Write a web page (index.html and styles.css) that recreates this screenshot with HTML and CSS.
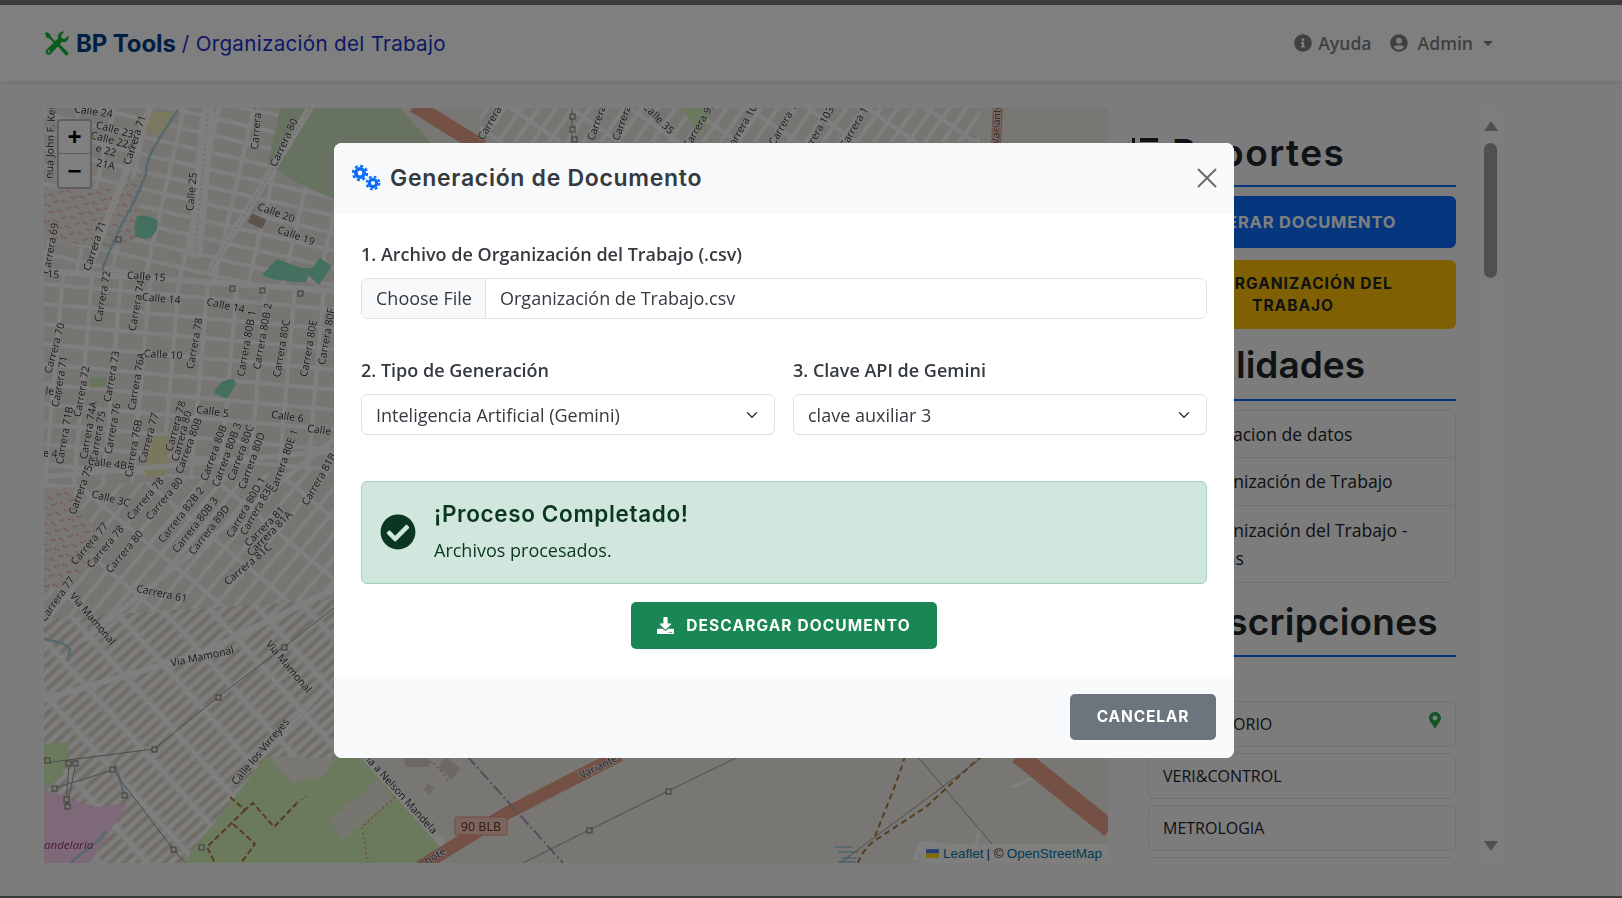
FILE: index.html
```html
<!DOCTYPE html>
<html lang="es">
<head>
    <meta charset="UTF-8">
    <meta name="viewport" content="width=device-width, initial-scale=1.0">
    <title>BP Tools - Organización del Trabajo</title>
    <link rel="stylesheet" href="styles.css">
</head>
<body>
    <nav class="navbar">
        <div class="brand">
            <svg class="brand-icon" viewBox="0 0 24 24">
                <path d="M1 2.500 2.500 1l3.500 2 .5 2.500L13 12l-1.500 1.500L5 7 2.500 6.500z" fill="#14b83a"/>
                <path d="M13 14.500 15 12.500l8 8c.6.6.6 1.500 0 2.100l-.4.4c-.6.6-1.500.6-2.100 0z" fill="#14b83a"/>
                <path d="M23.400 4.200c.7 2.600-.4 5-2.500 6-1.300.6-2.500.5-3.500.1L7 21.500c-1.300 1.500-3.400 1.700-4.700.5-1.300-1.200-1.100-3.300.4-4.600L13.600 7c-.4-1.100-.4-2.400.2-3.600C14.800 1.300 17-.1 19.700.5L16.300 4l.7 3 3 .7z" fill="#14b83a"/>
                <circle cx="4.700" cy="19.600" r="1.100" fill="#fff"/>
            </svg>
            <span class="brand-name">BP Tools</span>
            <span class="brand-page">/ Organización del Trabajo</span>
        </div>
        <div class="nav-links">
            <a class="nav-link">
                <svg class="nav-icon" viewBox="0 0 512 512"><path d="M256 8C119.043 8 8 119.083 8 256c0 136.997 111.043 248 248 248s248-111.003 248-248C504 119.083 392.957 8 256 8zm0 110c23.196 0 42 18.804 42 42s-18.804 42-42 42-42-18.804-42-42 18.804-42 42-42zm56 254c0 6.627-5.373 12-12 12h-88c-6.627 0-12-5.373-12-12v-24c0-6.627 5.373-12 12-12h12v-64h-12c-6.627 0-12-5.373-12-12v-24c0-6.627 5.373-12 12-12h64c6.627 0 12 5.373 12 12v100h12c6.627 0 12 5.373 12 12v24z"/></svg>
                Ayuda
            </a>
            <a class="nav-link user-link">
                <svg class="nav-icon" viewBox="0 0 496 512"><path d="M248 8C111 8 0 119 0 256s111 248 248 248 248-111 248-248S385 8 248 8zm0 96c48.6 0 88 39.4 88 88s-39.4 88-88 88-88-39.4-88-88 39.4-88 88-88zm0 344c-58.7 0-111.3-26.6-146.5-68.2 18.8-35.4 55.600-59.800 98.500-59.800 2.400 0 4.800.4 7.100 1.100 13 4.200 26.600 6.900 40.900 6.900 14.300 0 28-2.700 40.900-6.900 2.300-.7 4.700-1.100 7.100-1.100 42.900 0 79.700 24.400 98.500 59.800C359.300 421.400 306.700 448 248 448z"/></svg>
                Admin
                <span class="caret"></span>
            </a>
        </div>
    </nav>

    <main class="main-row">
        <section class="map">
            <svg class="map-tiles" viewBox="44 109 1064 755" preserveAspectRatio="none">
                <defs>
                    <pattern id="blocks-a" width="34" height="17" patternUnits="userSpaceOnUse" patternTransform="rotate(13)">
                        <rect width="34" height="17" fill="#fff"/>
                        <rect x="2" y="2" width="30" height="13" rx="1" fill="#efebe3"/>
                    </pattern>
                    <pattern id="blocks-b" width="29" height="20" patternUnits="userSpaceOnUse" patternTransform="rotate(5)">
                        <rect width="29" height="20" fill="#fff"/>
                        <rect x="2" y="2" width="25" height="16" rx="1" fill="#efebe3"/>
                    </pattern>
                    <pattern id="strips-a" width="46" height="15" patternUnits="userSpaceOnUse" patternTransform="rotate(-50)">
                        <rect width="46" height="15" fill="#fff"/>
                        <rect x="2" y="2" width="42" height="11" rx="1" fill="#efebe3"/>
                    </pattern>
                    <pattern id="strips-b" width="36" height="9" patternUnits="userSpaceOnUse" patternTransform="rotate(-42)">
                        <rect width="36" height="9" fill="#fff"/>
                        <rect x="2" y="1.500" width="32" height="6" rx="1" fill="#efebe3"/>
                        <rect x="5" y="3.500" width="26" height="2" fill="#d9cfc2"/>
                    </pattern>
                    <pattern id="strips-c" width="14" height="34" patternUnits="userSpaceOnUse" patternTransform="rotate(35)">
                        <rect width="14" height="34" fill="#fff"/>
                        <rect x="2" y="2" width="10" height="30" rx="1" fill="#efebe3"/>
                    </pattern>
                    <pattern id="foot-dots" width="14" height="11" patternUnits="userSpaceOnUse" patternTransform="rotate(25)">
                        <rect width="14" height="11" fill="#f2efe9"/>
                        <path d="M1 2h3M8 7h3M6 1v2M12 4v2" stroke="#f08a78" stroke-width="1"/>
                    </pattern>
                </defs>

                <rect x="44" y="109" width="1064" height="755" fill="#f2efe9"/>

                <!-- barrios -->
                <polygon points="44,109 334,109 334,290 44,272" fill="url(#blocks-a)"/>
                <polygon points="44,272 334,290 334,500 44,490" fill="url(#blocks-b)"/>
                <polygon points="44,490 334,470 334,640 44,620" fill="url(#strips-a)"/>
                <polygon points="44,620 334,600 334,760 270,757 183,864 44,864" fill="url(#strips-b)"/>
                <polygon points="480,109 980,109 980,143 480,143" fill="url(#strips-c)"/>

                <!-- zonas -->
                <polygon points="44,190 120,190 145,170 135,240 108,250 44,240" fill="url(#foot-dots)"/>
                <polygon points="44,490 70,490 100,540 70,590 44,590" fill="url(#foot-dots)"/>
                <polygon points="142,113 177,113 167,135 140,132" fill="#f6f0c4"/>
                <polygon points="280,109 400,109 430,143 334,200 300,185 268,165" fill="#cfe6c0"/>
                <polygon points="150,437 170,437 165,477 145,477" fill="#f3eebc"/>
                <polygon points="682,109 712,109 700,138" fill="#d6f4b8"/>
                <path d="M137 217q14-1 21 5 0 12-8 17-9 2-15-2-1-12 2-20z" fill="#88e0be"/>
                <path d="M262 276l15-16 25 9 9 0-5 14-12 0-22-3z" fill="#88e0be"/>
                <path d="M307 275l13-16 12 8-13 19z" fill="#88e0be"/>
                <path d="M214 394q6-15 20-14l2 5q-6 10-9 15z" fill="#88e0be"/>
                <rect x="90" y="379" width="16" height="9" fill="#cdeab8"/>
                <rect x="249" y="217" width="16" height="10" fill="#b8a89a" transform="rotate(25 257 222)"/>
                <polygon points="44,790 95,808 127,805 90,864 44,864" fill="#fad2f0"/>
                <polygon points="44,745 70,743 65,770 50,787 44,785" fill="#d6f4b8"/>

                <!-- parque sur -->
                <polygon points="183,864 267,757 293,785 310,778 320,781 333,765 337,757 363,757 378,778 440,847 420,864" fill="#d6f4b8"/>
                <polygon points="328,822 378,780 393,800 343,840" fill="#efeae1"/>
                <path d="M230 798l15 13 8-7 21 24 23-24M245 811l-38 37 8 16M233 825l22 20-14 19" fill="none" stroke="#ac7a3c" stroke-width="2" stroke-dasharray="6 3"/>
                <path d="M297 804l10-7M395 798l-33 30 6 36" fill="none" stroke="#f08a78" stroke-width="1.300" stroke-dasharray="2 3"/>

                <!-- vias -->
                <g fill="none" stroke="#fff" stroke-linecap="round">
                    <path d="M44 272 334 292" stroke-width="6"/>
                    <path d="M310 109 210 272" stroke-width="7"/>
                    <path d="M150 109 88 272" stroke-width="7"/>
                    <path d="M208 115 195 252" stroke-width="15"/>
                    <path d="M44 478 334 452M85 640 334 440" stroke-width="5"/>
                    <path d="M44 700 200 655 334 590" stroke-width="6"/>
                    <path d="M262 757 334 680" stroke-width="4"/>
                    <path d="M364 757 445 848" stroke-width="7"/>
                    <path d="M915 860l6-16 24 2M956 864l20-18 4-16M1000 864l-8-8" stroke-width="4"/>
                    <path d="M1012 788l20-9" stroke-width="3"/>
                </g>
                <path d="M310 109 210 272M208 115 195 252" fill="none" stroke="#bbb" stroke-width=".8" stroke-dasharray="2 3"/>

                <!-- rio -->
                <path d="M178 111q-14 20-24 38-8 12-8 26-12 30-22 46-14 28-22 50" fill="none" stroke="#aad3df" stroke-width="2.500"/>
                <path d="M44 640l18 4 8 6-2 12M115 765l10 32M70 864l30-24 6-8" fill="none" stroke="#aad3df" stroke-width="2.500"/>
                <path d="M835 848h17M838 853h20M842 859h15M838 863h18" stroke="#aad3df" stroke-width="2"/>

                <!-- autopistas -->
                <g fill="none" stroke="#e8a08a" stroke-linecap="butt">
                    <path d="M414 106 482 148" stroke-width="15"/>
                    <path d="M420 868 507 814 620 756" stroke-width="13"/>
                    <path d="M1018 756 1110 830" stroke-width="18"/>
                    <path d="M998 105 996 145" stroke-width="10"/>
                </g>

                <!-- alta tension y vias menores -->
                <g fill="none" stroke="#9a9a9a" stroke-width="1">
                    <path d="M44 764 154 750 218 698 284 648 340 604"/>
                    <path d="M55 789 113 771 173 850 192 872"/>
                    <path d="M69 764 66 807M76 764 67 807"/>
                    <path d="M523 864 589 831 668 792 740 757"/>
                    <path d="M840 864 984 757"/>
                    <path d="M917 757 992 845"/>
                    <path d="M572 109v34"/>
                </g>
                <g fill="#efeae1" stroke="#777" stroke-width="1">
                    <rect x="45" y="759" width="5" height="5"/><rect x="66" y="762" width="5" height="5"/><rect x="73" y="762" width="5" height="5"/>
                    <rect x="110" y="768" width="5" height="5"/><rect x="52" y="787" width="5" height="5"/><rect x="64" y="798" width="5" height="5"/>
                    <rect x="65" y="805" width="5" height="5"/><rect x="122" y="794" width="5" height="5"/><rect x="152" y="748" width="5" height="5"/>
                    <rect x="171" y="848" width="5" height="5"/><rect x="199" y="846" width="5" height="5"/><rect x="216" y="696" width="5" height="5"/>
                    <rect x="282" y="646" width="5" height="5"/><rect x="587" y="829" width="5" height="5"/><rect x="666" y="790" width="5" height="5"/>
                    <rect x="570" y="115" width="5" height="5"/><rect x="570" y="128" width="5" height="5"/><rect x="572" y="138" width="5" height="5"/>
                    <rect x="230" y="287" width="5" height="5"/><rect x="260" y="289" width="5" height="5"/><rect x="298" y="292" width="5" height="5"/>
                    <rect x="116" y="238" width="5" height="5"/>
                </g>
                <path d="M467 757 563 864" fill="none" stroke="#a89ab4" stroke-width="2" stroke-dasharray="12 3 2 3"/>
                <path d="M858 864q4-12 16-22l52-34 54-50M905 757q-6 20-14 40t-16 40" fill="none" stroke="#ac7a3c" stroke-width="2" stroke-dasharray="6 4"/>
                <path d="M415 757l20 8 14 18" fill="none" stroke="#f08a78" stroke-width="1.200" stroke-dasharray="2 3"/>
                <rect x="440" y="762" width="18" height="14" fill="#d9d0c9" transform="rotate(40 449 769)"/>
                <rect x="425" y="786" width="8" height="8" fill="#d9d0c9" transform="rotate(40 429 790)"/>
                <rect x="405" y="758" width="24" height="10" fill="#d9d0c9"/>

                <rect x="455" y="818" width="52" height="18" rx="2" fill="#f7cdbc" stroke="#e8927a"/>
                <text class="shield" x="481" y="832">90 BLB</text>

                <!-- nombres de calles, centrados en su punto -->
                <g class="street">
                    <text transform="translate(93 116) rotate(8)">Calle 24</text>
                    <text transform="translate(114 134) rotate(15)">Calle 23</text>
                    <text transform="translate(112 145) rotate(15)">Calle 22A</text>
                    <text transform="translate(105 155) rotate(15)">e 22</text>
                    <text transform="translate(105 169) rotate(12)">21A</text>
                    <text transform="translate(54 142) rotate(-88)">nua John F. Ken</text>
                    <text transform="translate(138 142) rotate(-72)">Carrera 71</text>
                    <text transform="translate(195 193) rotate(-85)">Calle 25</text>
                    <text transform="translate(260 128) rotate(-85)">Carrera 7</text>
                    <text transform="translate(287 145) rotate(-65)">Carrera 80</text>
                    <text transform="translate(98 248) rotate(-72)">Carrera 71</text>
                    <text transform="translate(54 250) rotate(-80)">Carrera 69</text>
                    <text transform="translate(275 217) rotate(20)">Calle 20</text>
                    <text transform="translate(295 240) rotate(20)">Calle 19</text>
                    <text transform="translate(146 281) rotate(4)">Calle 15</text>
                    <text transform="translate(53 279) rotate(4)">15</text>
                    <text transform="translate(106 298) rotate(-80)">Carrera 72</text>
                    <text transform="translate(140 307) rotate(-80)">Carrera 74</text>
                    <text transform="translate(161 303) rotate(5)">Calle 14</text>
                    <text transform="translate(225 310) rotate(12)">Calle 14</text>
                    <text transform="translate(198 345) rotate(-80)">Carrera 78</text>
                    <text transform="translate(250 345) rotate(-80)">Carrera 80B 1</text>
                    <text transform="translate(266 338) rotate(-80)">Carrera 80B 2</text>
                    <text transform="translate(285 350) rotate(-80)">Carrera 80C</text>
                    <text transform="translate(312 350) rotate(-80)">Carrera 80E</text>
                    <text transform="translate(330 338) rotate(-80)">Carrera 80F</text>
                    <text transform="translate(58 350) rotate(-75)">Carrera 70</text>
                    <text transform="translate(163 359) rotate(3)">Calle 10</text>
                    <text transform="translate(115 378) rotate(-80)">Carrera 73</text>
                    <text transform="translate(140 383) rotate(-80)">Carrera 76A</text>
                    <text transform="translate(54 396) rotate(5)">le 5</text>
                    <text transform="translate(63 383) rotate(-80)">Carrera 71</text>
                    <text transform="translate(85 393) rotate(-80)">Carrera 72</text>
                    <text transform="translate(212 416) rotate(8)">Calle 5</text>
                    <text transform="translate(287 421) rotate(8)">Calle 6</text>
                    <text transform="translate(323 435) rotate(8)">Calle 5</text>
                    <text transform="translate(68 437) rotate(-80)">Carrera 71B</text>
                    <text transform="translate(92 432) rotate(-80)">Carrera 74A</text>
                    <text transform="translate(101 438) rotate(-80)">Carrera 75</text>
                    <text transform="translate(116 430) rotate(-80)">Carrera 76</text>
                    <text transform="translate(137 450) rotate(-80)">Carrera 76B</text>
                    <text transform="translate(152 440) rotate(-75)">Carrera 77</text>
                    <text transform="translate(179 428) rotate(-75)">Carrera 78</text>
                    <text transform="translate(185 438) rotate(-75)">Carrera 80</text>
                    <text transform="translate(192 448) rotate(-70)">Carrera 80B</text>
                    <text transform="translate(217 455) rotate(-70)">Carrera 80B</text>
                    <text transform="translate(230 457) rotate(-70)">Carrera 80B 3</text>
                    <text transform="translate(244 455) rotate(-70)">Carrera 80C</text>
                    <text transform="translate(255 463) rotate(-70)">Carrera 80D</text>
                    <text transform="translate(287 463) rotate(-70)">Carrera 80E 1</text>
                    <text transform="translate(322 482) rotate(-60)">Carrera 81B</text>
                    <text transform="translate(50 458) rotate(5)">e 4</text>
                    <text transform="translate(107 468) rotate(7)">Calle 4B</text>
                    <text transform="translate(84 492) rotate(-70)">Carrera 75</text>
                    <text transform="translate(110 503) rotate(15)">Calle 3C</text>
                    <text transform="translate(148 502) rotate(-50)">Carrera 78</text>
                    <text transform="translate(167 502) rotate(-50)">Carrera 80</text>
                    <text transform="translate(184 518) rotate(-52)">Carrera 82B 2</text>
                    <text transform="translate(198 528) rotate(-52)">Carrera 80B 3</text>
                    <text transform="translate(212 533) rotate(-52)">Carrera 89D</text>
                    <text transform="translate(249 510) rotate(-60)">Carrera 80D 1</text>
                    <text transform="translate(260 512) rotate(-60)">Carrera 83E</text>
                    <text transform="translate(267 530) rotate(-45)">Carrera 81</text>
                    <text transform="translate(272 537) rotate(-45)">Carrera 81A</text>
                    <text transform="translate(250 568) rotate(-40)">Carrera 81C</text>
                    <text transform="translate(92 547) rotate(-50)">Carrera 77</text>
                    <text transform="translate(108 550) rotate(-50)">Carrera 78</text>
                    <text transform="translate(127 555) rotate(-50)">Carrera 80</text>
                    <text transform="translate(161 598) rotate(12)">Carrera 61</text>
                    <text transform="translate(60 602) rotate(-55)">Carrera 77</text>
                    <text transform="translate(90 622) rotate(50)">Via Mamonal</text>
                    <text transform="translate(203 661) rotate(-12)">Via Mamonal</text>
                    <text transform="translate(286 670) rotate(50)">Via Mamonal</text>
                    <text transform="translate(263 755) rotate(-50)">Calle los Virreyes</text>
                    <text transform="translate(397 796) rotate(48)">Via a Nelson Mandela</text>
                    <text transform="translate(600 771) rotate(-27)">Variante</text>
                    <text transform="translate(437 860) rotate(-32)">bote</text>
                    <text transform="translate(1000 125) rotate(-88)">Variante</text>
                    <text transform="translate(495 122) rotate(-60)">Carrera 8</text>
                    <text transform="translate(656 122) rotate(45)">Calle 35</text>
                    <text transform="translate(600 125) rotate(-70)">Carrera</text>
                    <text transform="translate(625 125) rotate(-70)">Carrera</text>
                    <text transform="translate(702 128) rotate(-60)">Carrera 99</text>
                    <text transform="translate(746 128) rotate(-60)">Carrera 101</text>
                    <text transform="translate(789 122) rotate(-60)">Carrera 102</text>
                    <text transform="translate(820 135) rotate(-60)">Carrera 103</text>
                    <text transform="translate(860 125) rotate(-60)">Carrera 104</text>
                </g>
                <text class="place" x="44" y="850">andelaria</text>
            </svg>

            <div class="zoom-ctrl">
                <a class="zoom-btn zoom-in">+</a>
                <a class="zoom-btn">&minus;</a>
            </div>
            <div class="attribution">
                <svg class="flag" viewBox="0 0 12 8"><rect width="12" height="4" fill="#4c7be1"/><rect y="4" width="12" height="4" fill="#ffd500"/></svg>
                <a>Leaflet</a> | © <a>OpenStreetMap</a>
            </div>
        </section>

        <aside class="sidebar">
            <div class="sidebar-scroll">
                <h2 class="side-title title-reports">
                    <svg class="title-icon" viewBox="0 0 30 30"><path d="M2 0h3v28H2zM10 0h18v4H10zM10 10h12v4H10zM10 20h18v4H10z"/></svg>
                    Reportes
                </h2>
                <button class="side-btn btn-blue">GENERAR DOCUMENTO</button>
                <button class="side-btn btn-yellow">
                    <svg class="btn-icon" viewBox="0 0 16 16"><path d="M2 1h9l3 3v11H2z"/></svg>
                    ORGANIZACIÓN DEL TRABAJO
                </button>

                <h2 class="side-title title-utils">
                    <svg class="title-icon" viewBox="0 0 30 30"><path d="M2 4h26v4H2zM2 13h26v4H2zM2 22h26v4H2z"/></svg>
                    Utilidades
                </h2>
                <ul class="func-list">
                    <li><span class="func-dot"></span>Validacion de datos</li>
                    <li><span class="func-dot"></span>Organización de Trabajo</li>
                    <li><span class="func-dot"></span>Organización del Trabajo - Fichas</li>
                </ul>

                <h2 class="side-title title-subs">
                    <svg class="title-icon" viewBox="0 0 30 30"><path d="M2 4h26v22H2z"/></svg>
                    Inscripciones
                </h2>
                <ul class="sub-list">
                    <li>LABORATORIO
                        <svg class="pin" viewBox="0 0 384 512"><path d="M172.268 501.67C26.97 291.031 0 268.413 0 192 0 85.961 85.961 0 192 0s192 85.961 192 192c0 76.413-26.97 99.031-172.268 309.67-9.535 13.774-29.93 13.773-39.464 0zM192 272c44.183 0 80-35.817 80-80s-35.817-80-80-80-80 35.817-80 80 35.817 80 80 80z"/></svg>
                    </li>
                    <li>VERI&amp;CONTROL</li>
                    <li>METROLOGIA</li>
                    <li>CALIDAD</li>
                </ul>
            </div>
            <div class="scrollbar">
                <span class="arrow-up"></span>
                <span class="thumb"></span>
                <span class="arrow-down"></span>
            </div>
        </aside>
    </main>
    <div class="bottom-edge"></div>

    <div class="backdrop">
        <div class="modal">
            <header class="modal-header">
                <h3 class="modal-title">
                    <svg class="gears" viewBox="0 0 30 27" fill="none" stroke="#0d6efd">
                        <circle cx="9" cy="9" r="4.200" stroke-width="3.600"/>
                        <circle cx="9" cy="9" r="7" stroke-width="2.400" stroke-dasharray="3 2.500"/>
                        <circle cx="22" cy="19" r="3.700" stroke-width="3.200"/>
                        <circle cx="22" cy="19" r="6.300" stroke-width="2.200" stroke-dasharray="2.700 2.250"/>
                    </svg>
                    Generación de Documento
                </h3>
                <svg class="close-x" viewBox="0 0 20 20"><path d="M1 1l18 18M19 1 1 19" stroke="#6c6c6c" stroke-width="2"/></svg>
            </header>
            <div class="modal-body">
                <label class="field-label">1. Archivo de Organización del Trabajo (.csv)</label>
                <div class="file-input">
                    <span class="file-btn">Choose File</span>
                    <span class="file-name">Organización de Trabajo.csv</span>
                </div>
                <div class="field-row">
                    <div class="field">
                        <label class="field-label">2. Tipo de Generación</label>
                        <select class="select-box">
                            <option>Inteligencia Artificial (Gemini)</option>
                        </select>
                    </div>
                    <div class="field">
                        <label class="field-label">3. Clave API de Gemini</label>
                        <select class="select-box">
                            <option>clave auxiliar 3</option>
                        </select>
                    </div>
                </div>
                <div class="alert-ok">
                    <svg class="alert-icon" viewBox="0 0 512 512"><path d="M504 256c0 136.967-111.033 248-248 248S8 392.967 8 256 119.033 8 256 8s248 111.033 248 248zM227.314 387.314l184-184c6.248-6.248 6.248-16.379 0-22.627l-22.627-22.627c-6.248-6.249-16.379-6.249-22.628 0L216 308.118l-70.059-70.059c-6.248-6.248-16.379-6.248-22.628 0l-22.627 22.627c-6.248 6.248-6.248 16.379 0 22.627l104 104c6.249 6.249 16.379 6.249 22.628.001z"/></svg>
                    <div>
                        <h4 class="alert-title">¡Proceso Completado!</h4>
                        <p class="alert-text">Archivos procesados.</p>
                    </div>
                </div>
                <div class="download-row">
                    <button class="btn-download">
                        <svg class="download-icon" viewBox="0 0 512 512"><path d="M216 0h80c13.3 0 24 10.700 24 24v168h87.700c17.800 0 26.700 21.500 14.100 34.100L269.700 378.300c-7.500 7.500-19.800 7.500-27.300 0L90.100 226.100c-12.600-12.600-3.700-34.100 14.100-34.100H192V24c0-13.300 10.700-24 24-24zm296 376v112c0 13.300-10.700 24-24 24H24c-13.300 0-24-10.700-24-24V376c0-13.300 10.700-24 24-24h146.700l49 49c20.100 20.100 52.500 20.100 72.600 0l49-49H488c13.300 0 24 10.700 24 24zm-124 88c0-11-9-20-20-20s-20 9-20 20 9 20 20 20 20-9 20-20zm64 0c0-11-9-20-20-20s-20 9-20 20 9 20 20 20 20-9 20-20z"/></svg>
                        DESCARGAR DOCUMENTO
                    </button>
                </div>
            </div>
            <footer class="modal-footer">
                <button class="btn-cancel">CANCELAR</button>
            </footer>
        </div>
    </div>
</body>
</html>
```

FILE: styles.css
```css
* { box-sizing: border-box; }
html, body { margin: 0; height: 100%; }
body {
    display: flex;
    flex-direction: column;
    height: 898px;
    overflow: hidden;
    border-top: 5px solid #767676;
    background: #f8f9fa;
    color: #212529;
    font-family: "Open Sans", sans-serif;
    font-size: 17.6px;
}

/* navbar */
.navbar {
    display: flex;
    align-items: center;
    justify-content: space-between;
    height: 76px;
    padding: 0 129px 0 44px;
    background: #fff;
    box-shadow: 0 2px 4px rgba(0,0,0,.08);
    position: relative;
    flex: none;
}
.brand { display: flex; align-items: center; font-family: Inter, sans-serif; }
.brand-icon { width: 25px; height: 25px; margin-right: 7px; }
.brand-name { font-size: 24px; font-weight: 700; color: #003f88; letter-spacing: -.1px; }
.brand-page { font-size: 20.6px; color: #2030c8; margin-left: 6px; letter-spacing: .3px; }
.nav-links { display: flex; align-items: center; gap: 18px; }
.nav-link { display: flex; align-items: center; gap: 6px; font-weight: 600; color: #808080; }
.user-link { gap: 10px; }
.nav-icon { width: 18px; height: 18px; fill: #808080; }
.caret {
    width: 0;
    height: 0;
    border-left: 5px solid transparent;
    border-right: 5px solid transparent;
    border-top: 5px solid #808080;
}

/* main area */
.main-row { display: flex; flex: 1; min-height: 0; padding: 27px 0 0 44px; }
.bottom-edge { height: 2px; background: #767676; flex: none; }
.map { position: relative; width: 1064px; height: 755px; flex: none; overflow: hidden; }
.map-tiles { display: block; width: 100%; height: 100%; filter: blur(.55px); }
.street text { font-family: "Noto Sans", sans-serif; font-size: 10.5px; fill: #3c3c3c; stroke: #fff; stroke-width: 1.2px; paint-order: stroke; text-anchor: middle; }
.shield { font-family: "Noto Sans", sans-serif; font-size: 12.500px; fill: #6b3a2a; text-anchor: middle; }
.place { font-family: "Noto Sans", sans-serif; font-style: italic; font-size: 11.500px; fill: #9c3f86; }
.zoom-ctrl {
    position: absolute;
    left: 13px;
    top: 11px;
    width: 35px;
    height: 70px;
    background: #fff;
    border: 2px solid rgba(0,0,0,.25);
    border-radius: 4px;
}
.zoom-btn {
    display: flex;
    align-items: center;
    justify-content: center;
    height: 33px;
    font: 700 24px "Liberation Sans", sans-serif;
    color: #000;
}
.zoom-in { border-bottom: 1px solid #bbb; }
.attribution {
    position: absolute;
    right: 0;
    bottom: 0;
    height: 19px;
    padding: 0 6px;
    display: flex;
    align-items: center;
    gap: 3px;
    background: rgba(255,255,255,.8);
    font: 13.500px "Liberation Sans", sans-serif;
    color: #333;
}
.attribution a { color: #0078a8; }
.flag { width: 13px; height: 9px; margin-right: 1px; }

/* sidebar */
.sidebar { display: flex; width: 395px; flex: none; height: 755px; }
.sidebar-scroll { width: 370px; height: 100%; overflow: hidden; padding: 0 22px 0 22px; }
.side-title {
    display: flex;
    align-items: center;
    margin: 0 0 9px;
    height: 55px;
    border-bottom: 2px solid #0d6efd;
    font-family: Inter, sans-serif;
    font-size: 37px;
    font-weight: 600;
    color: #212529;
}
.title-icon { width: 30px; height: 30px; fill: #212529; flex: none; }
.title-reports { margin-top: 24px; padding-bottom: 12px; letter-spacing: 1.5px; }
.title-reports .title-icon { margin-right: 12px; }
.title-utils { margin-top: 17px; padding-bottom: 16px; }
.title-utils .title-icon { margin-right: 26px; }
.title-subs { margin-top: 19px; padding-bottom: 14px; letter-spacing: .2px; margin-bottom: 44px; }
.title-subs .title-icon { margin-right: 34px; }
.side-btn {
    display: block;
    width: 100%;
    border: 0;
    border-radius: 6px;
    font-family: Inter, sans-serif;
    font-weight: 700;
    text-align: center;
}
.btn-blue { height: 52px; background: #0d6efd; color: #fff; font-size: 16.500px; letter-spacing: .8px; }
.btn-yellow { height: 69px; margin-top: 12px; padding: 0 50px; background: #ffc107; color: #212529; font-size: 15.500px; line-height: 22px; letter-spacing: 1px; }
.btn-icon { width: 16px; height: 16px; margin-right: 8px; vertical-align: -2px; fill: #212529; }
.func-list, .sub-list { list-style: none; margin: 0; padding: 0 0 0 18px; }
.func-list li {
    position: relative;
    padding: 9.500px 14px 9.500px 44px;
    line-height: 28.500px;
    border: 1px solid #dee2e6;
    margin-top: -1px;
}
.func-list li:first-child { margin-top: 0; padding-top: 8.500px; padding-bottom: 8.500px; border-radius: 6px 6px 0 0; }
.func-list li:last-child { border-radius: 0 0 6px 6px; }
.func-dot { position: absolute; left: 16px; top: 16px; width: 14px; height: 14px; background: #0d6efd; border-radius: 3px; }
.sub-list li {
    position: relative;
    display: flex;
    align-items: center;
    justify-content: space-between;
    height: 46px;
    padding: 0 14px;
    margin-bottom: 6px;
    border: 1px solid #dee2e6;
    border-radius: 6px;
    font-size: 16px;
}
.pin { width: 12px; height: 16px; fill: #28a745; margin-top: -8px; }

/* fake browser scrollbar */
.scrollbar {
    display: flex;
    flex-direction: column;
    align-items: center;
    width: 25px;
    height: 100%;
    background: #fbfbfb;
}
.thumb { width: 13px; height: 135px; margin-top: 12px; border-radius: 7px; background: #a0a0a0; }
.arrow-up, .arrow-down { width: 0; height: 0; border-left: 7.500px solid transparent; border-right: 7.500px solid transparent; }
.arrow-up { margin-top: 13px; border-bottom: 10px solid #a0a0a0; }
.arrow-down { margin-top: auto; margin-bottom: 12px; border-top: 10px solid #a0a0a0; }

/* modal */
.backdrop {
    position: fixed;
    inset: 0;
    display: flex;
    align-items: center;
    justify-content: center;
    padding-right: 54px;
    background: rgba(0,0,0,.5);
}
.modal {
    width: 900px;
    height: 615px;
    margin-top: 3px;
    display: flex;
    flex-direction: column;
    background: #fff;
    border-radius: 8px;
    overflow: hidden;
    font-size: 18px;
}
.modal-header {
    display: flex;
    align-items: center;
    justify-content: space-between;
    height: 71px;
    padding: 0 17px 2px;
    background: #f8f9fa;
    flex: none;
}
.modal-title {
    display: flex;
    align-items: center;
    margin: 0;
    font-family: Inter, sans-serif;
    font-size: 23px;
    font-weight: 600;
    letter-spacing: .7px;
    color: #343a40;
}
.gears { width: 30px; height: 27px; margin-right: 9px; }
.close-x { width: 20px; height: 20px; }
.modal-body { height: 463px; flex: none; padding: 27px 27px 0; }
.field-label { display: block; line-height: 26px; margin-bottom: 11px; font-weight: 600; color: #343a40; }
.file-input {
    display: flex;
    height: 41px;
    border: 1px solid #dee2e6;
    border-radius: 6px;
    line-height: 39px;
    overflow: hidden;
    color: #343a40;
}
.file-btn { width: 124px; padding-left: 14px; background: #f8f9fa; border-right: 1px solid #dee2e6; }
.file-name { padding-left: 14px; }
.field-row { display: flex; gap: 18px; margin-top: 38px; }
.field { flex: 1; }
.select-box {
    display: block;
    width: 100%;
    height: 41px;
    padding: 0 14px;
    appearance: none;
    border: 1px solid #dee2e6;
    border-radius: 6px;
    color: #343a40;
    font: inherit;
    background: #fff url("data:image/svg+xml,%3Csvg xmlns='http://www.w3.org/2000/svg' viewBox='0 0 16 16'%3E%3Cpath fill='none' stroke='%23343a40' stroke-linecap='round' stroke-linejoin='round' stroke-width='2' d='m2 5 6 6 6-6'/%3E%3C/svg%3E") no-repeat right 14px center / 16px 12px;
}
.alert-ok {
    display: flex;
    align-items: center;
    gap: 18px;
    height: 103px;
    margin-top: 46px;
    padding: 0 18px 2px;
    background: #d1e7dd;
    border: 1px solid #a3cfbb;
    border-radius: 6px;
    color: #0a3622;
}
.alert-icon { width: 36px; height: 36px; fill: #0a3622; flex: none; }
.alert-title { margin: 0 0 9px; font-family: Inter, sans-serif; font-size: 22.500px; font-weight: 600; line-height: 28px; letter-spacing: .65px; }
.alert-text { margin: 0; line-height: 26px; }
.download-row { display: flex; justify-content: center; margin-top: 18px; }
.btn-download {
    display: flex;
    align-items: center;
    justify-content: center;
    gap: 12px;
    width: 306px;
    height: 47px;
    padding-bottom: 2px;
    border: 0;
    border-radius: 5px;
    background: #198754;
    color: #fff;
    font-family: Inter, sans-serif;
    font-size: 15.500px;
    font-weight: 700;
    letter-spacing: 1.1px;
}
.download-icon { width: 17px; height: 17px; fill: #fff; }
.modal-footer {
    display: flex;
    justify-content: flex-end;
    height: 81px;
    padding: 17px 18px 0;
    background: #f8f9fa;
    flex: none;
}
.btn-cancel {
    width: 146px;
    height: 46px;
    padding-bottom: 3px;
    border: 0;
    border-radius: 5px;
    background: #6c757d;
    color: #fff;
    font-family: Inter, sans-serif;
    font-size: 15.500px;
    font-weight: 700;
    letter-spacing: .85px;
}
```
